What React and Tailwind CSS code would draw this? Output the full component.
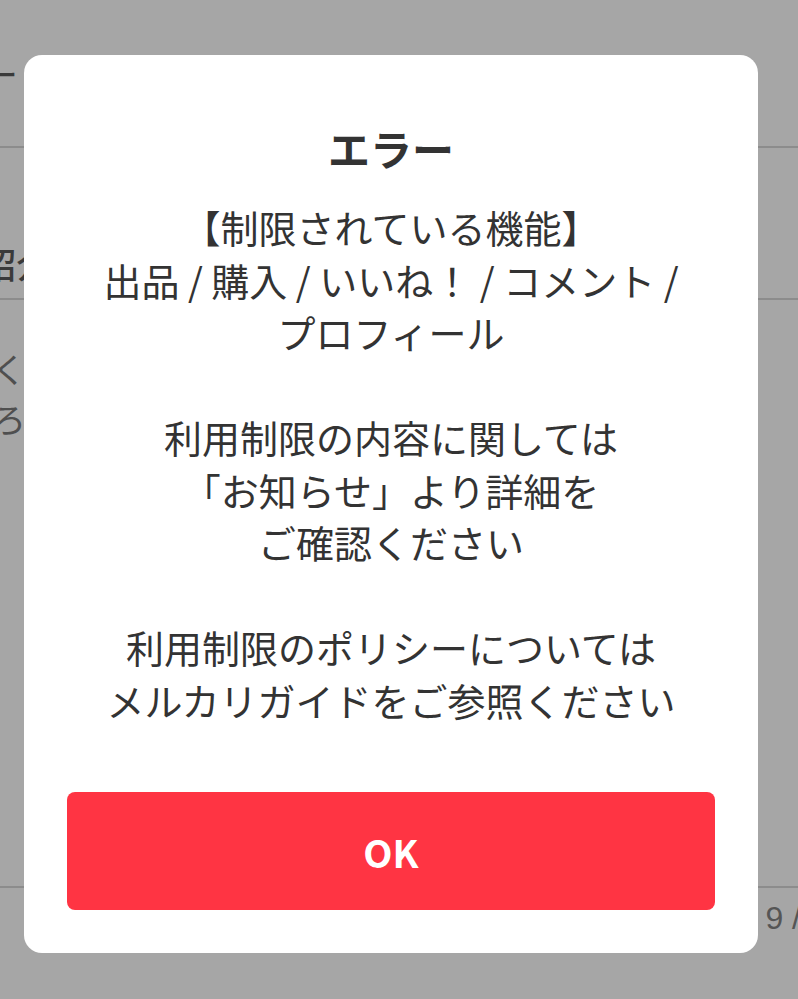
const BackgroundPage = () => (
  <div className="flex flex-col text-[#3a3a3a]">
    {/* header row, mostly hidden by the dialog */}
    <div className="h-[148px] border-b-2 border-[#8c8c8c] pt-[50px]">
      <p className="-ml-[18px] text-[36px] leading-[46px]">ー</p>
    </div>

    <div className="h-[152px] border-b-2 border-[#8c8c8c] pt-[92px]">
      <p className="-ml-[20px] text-[36px] font-medium leading-[46px]">紹介</p>
    </div>

    <div className="h-[588px] border-b-2 border-[#8c8c8c] pt-[44px] text-[#4f4f4f]">
      <p className="-ml-[8px] text-[34px] leading-[50px]">く</p>
      <p className="-ml-[8px] text-[34px] leading-[50px]">ろ</p>
    </div>

    <div className="flex justify-end pt-[10px] text-[#555]">
      <p className="-mr-[3px] whitespace-nowrap text-[32px] leading-[40px] font-['Liberation_Sans',sans-serif]">9 /</p>
    </div>
  </div>
);

const lines = [
  "【制限されている機能】",
  "出品 / 購入 / いいね！ / コメント /",
  "プロフィール",
  "",
  "利用制限の内容に関しては",
  "「お知らせ」より詳細を",
  "ご確認ください",
  "",
  "利用制限のポリシーについては",
  "メルカリガイドをご参照ください",
];

const ErrorDialog = () => (
  <div className="absolute left-[24px] top-[55px] flex w-[734px] flex-col rounded-[18px] bg-white px-[43px] pb-[43px] pt-[65px]">
    <h2 className="text-center text-[42px] font-bold leading-[56px] text-[#333]">
      エラー
    </h2>

    <div className="mt-[25px] text-center text-[38px] leading-[52.5px] text-[#333]">
      {lines.map((line, i) => (
        <p key={i} className="h-[52.5px] whitespace-nowrap">
          {line}
        </p>
      ))}
    </div>

    <button className="mt-[66px] h-[118px] w-full rounded-[8px] bg-[#ff3443] text-[38px] font-bold text-white">
      OK
    </button>
  </div>
);

export default function App() {
  return (
    <div className="relative h-[999px] w-[798px] overflow-hidden bg-[#a6a6a6] font-['Noto_Sans_CJK_JP',sans-serif]">
      <BackgroundPage />
      <ErrorDialog />
    </div>
  );
}
